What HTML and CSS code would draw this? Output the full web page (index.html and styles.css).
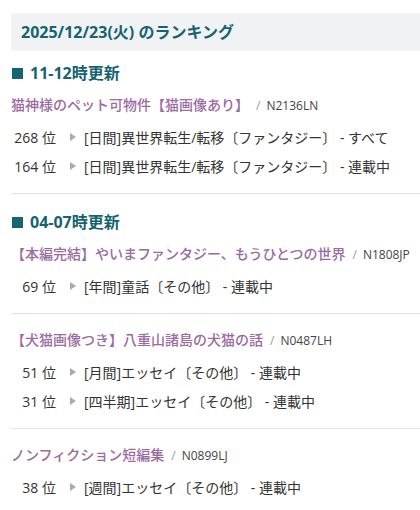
FILE: index.html
```html
<!DOCTYPE html>
<html lang="ja">
<head>
<meta charset="utf-8">
<title>ランキング</title>
<link rel="stylesheet" href="styles.css">
</head>
<body>
<div class="page">
  <h2 class="date-head">2025/12/23(火) のランキング</h2>

  <h3 class="update-head"><span class="sq"></span>11-12時更新</h3>
  <div class="item">
    <div class="title"><a class="name">猫神様のペット可物件【猫画像あり】</a><span class="slash">/</span><span class="ncode">N2136LN</span></div>
    <div class="rank"><span class="pos">268 位</span><span class="arrow"></span><span class="genre">[日間]異世界転生/転移〔ファンタジー〕 - すべて</span></div>
    <div class="rank"><span class="pos">164 位</span><span class="arrow"></span><span class="genre">[日間]異世界転生/転移〔ファンタジー〕 - 連載中</span></div>
  </div>

  <h3 class="update-head second"><span class="sq"></span>04-07時更新</h3>
  <div class="item">
    <div class="title"><a class="name">【本編完結】やいまファンタジー、もうひとつの世界</a><span class="slash">/</span><span class="ncode">N1808JP</span></div>
    <div class="rank"><span class="pos">69 位</span><span class="arrow"></span><span class="genre">[年間]童話〔その他〕 - 連載中</span></div>
  </div>
  <div class="item">
    <div class="title"><a class="name">【犬猫画像つき】八重山諸島の犬猫の話</a><span class="slash">/</span><span class="ncode">N0487LH</span></div>
    <div class="rank"><span class="pos">51 位</span><span class="arrow"></span><span class="genre">[月間]エッセイ〔その他〕 - 連載中</span></div>
    <div class="rank"><span class="pos">31 位</span><span class="arrow"></span><span class="genre">[四半期]エッセイ〔その他〕 - 連載中</span></div>
  </div>
  <div class="item last">
    <div class="title"><a class="name">ノンフィクション短編集</a><span class="slash">/</span><span class="ncode">N0899LJ</span></div>
    <div class="rank"><span class="pos">38 位</span><span class="arrow"></span><span class="genre">[週間]エッセイ〔その他〕 - 連載中</span></div>
  </div>
</div>
</body>
</html>
```

FILE: styles.css
```css
html, body {
  margin: 0;
  padding: 0;
  background: #ffffff;
}
body {
  font-family: "Open Sans", "Noto Sans CJK JP", sans-serif;
  color: #333333;
  overflow: hidden;
}
.page {
  padding: 13px 0 0 11px;
}
.date-head {
  margin: 0;
  height: 38px;
  box-sizing: border-box;
  padding: 0 0 0 10px;
  background: #f1f2f4;
  border-radius: 3px 0 0 3px;
  color: #15636e;
  font-size: 16px;
  font-weight: 700;
  line-height: 38px;
  margin-right: -4px;
}
.update-head {
  margin: 11px 0 0 0;
  display: flex;
  align-items: center;
  color: #15636e;
  font-size: 16px;
  font-weight: 700;
  line-height: 22px;
  height: 22px;
}
.update-head.second {
  margin-top: 17px;
}
.sq {
  display: inline-block;
  width: 11px;
  height: 11px;
  background: #136570;
  margin: 0 7px 0 1px;
}
.item {
  border-bottom: 1px solid #e3e3e3;
  padding: 0 0 13px 0;
}
.item + .item {
  padding-top: 15px;
}
.update-head + .item {
  padding-top: 10px;
}
.item.last {
  border-bottom: none;
}
.title {
  display: flex;
  align-items: baseline;
  line-height: 22px;
  height: 22px;
}
.name {
  color: #9a6aa0;
  font-size: 14px;
  font-weight: 500;
}
.slash {
  color: #999999;
  font-size: 12px;
  margin: 0 6px 0 7px;
}
.ncode {
  color: #444444;
  font-size: 12px;
}
.rank {
  display: flex;
  align-items: center;
  height: 29px;
  font-size: 14px;
  color: #333333;
}
.title + .rank {
  margin-top: 6px;
}
.pos {
  width: 45px;
  text-align: right;
}
.arrow {
  width: 0;
  height: 0;
  border-top: 4px solid transparent;
  border-bottom: 4px solid transparent;
  border-left: 6px solid #aaaaaa;
  margin: 0 8px 0 14px;
}
.genre {
  white-space: nowrap;
}
```
